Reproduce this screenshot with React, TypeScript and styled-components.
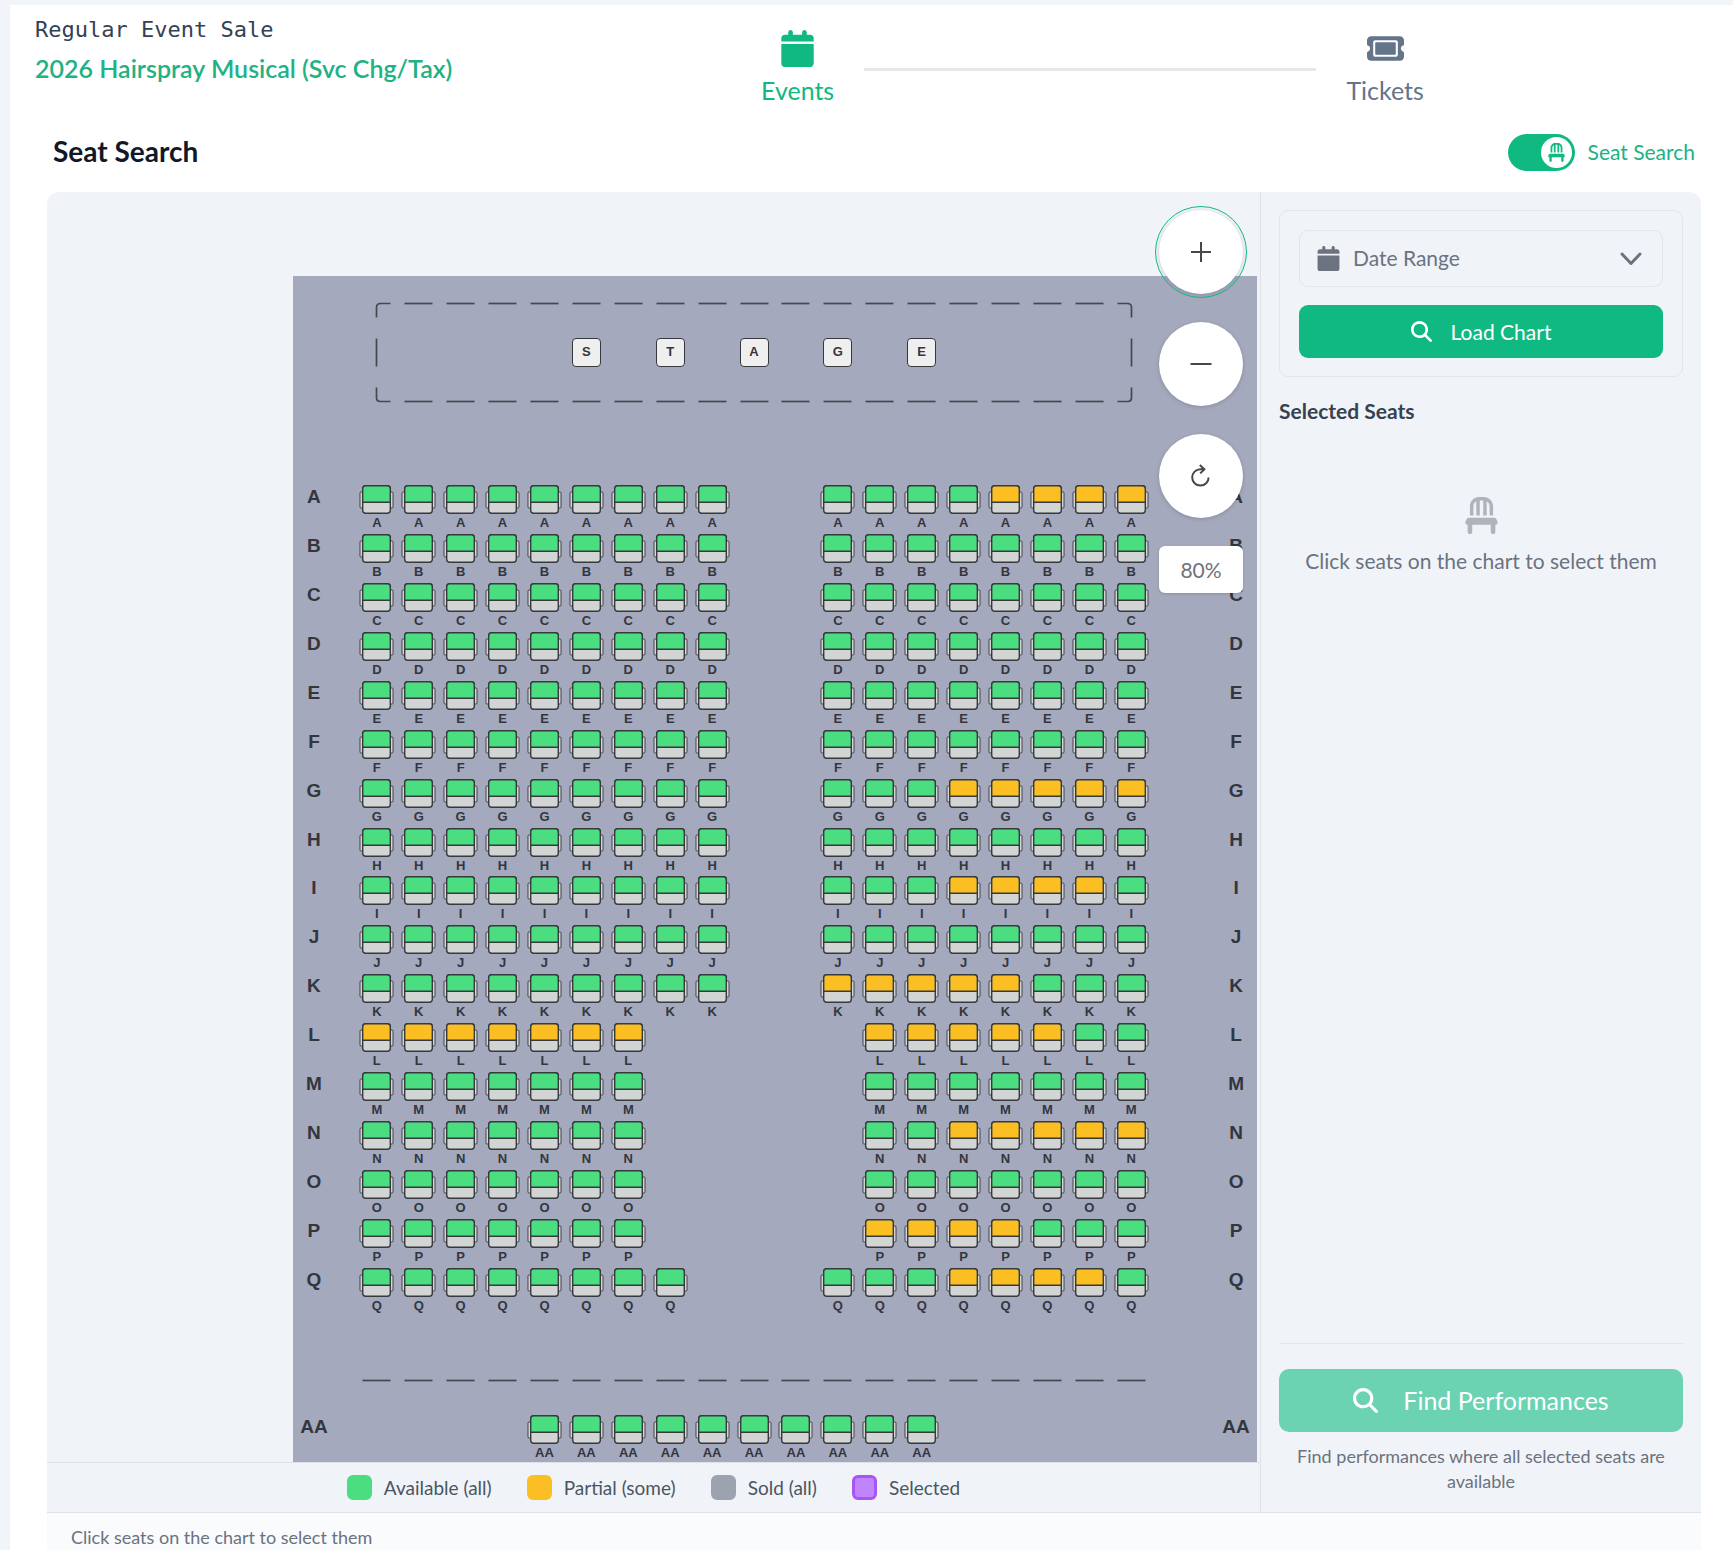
import React, { useState } from 'react';
import styled, { createGlobalStyle, css } from 'styled-components';
import { FaCalendar, FaTicket, FaChair, FaMagnifyingGlass } from 'react-icons/fa6';

const GlobalStyle = createGlobalStyle`
  *, *::before, *::after { box-sizing: border-box; }
  body {
    margin: 0;
    background: #f1f4f8;
    color: #374151;
    font-family: Lato, "Open Sans", sans-serif;
    font-size: 18px;
    line-height: 25px;
  }
  h1, h2, h3, p, ul { margin: 0; padding: 0; }
  ul { list-style: none; }
  button { font: inherit; border: 0; padding: 0; cursor: pointer; }
`;

const Page = styled.main`
  padding: 5px 0 0 10px;
`;

const Sheet = styled.div`
  background: #fff;
`;

const Header = styled.header`
  display: grid;
  grid-template-columns: minmax(0, 23fr) minmax(0, 21fr) minmax(0, 9fr);
  height: 117px;
  padding: 9px 25px 0;
`;

const SaleKind = styled.p`
  font-family: "DejaVu Sans Mono", monospace;
  font-size: 22px;
  line-height: 32px;
  color: #334155;
`;

const EventName = styled.h1`
  margin-top: 6px;
  font-size: 25px;
  line-height: 32px;
  font-weight: 600;
  color: #21b284;
`;

const Steps = styled.nav`
  display: flex;
  align-items: flex-start;
  gap: 30px;
`;

const Step = styled.a<{ $active?: boolean }>`
  display: flex;
  flex-direction: column;
  align-items: center;
  gap: 7px;
  padding-top: 16px;
  font-size: 25px;
  line-height: 32px;
  text-decoration: none;
  color: ${(p) => (p.$active ? '#10b981' : '#64748b')};
`;

const StepLine = styled.div`
  flex: 1;
  height: 3px;
  margin-top: 54px;
  background: #e5e7eb;
`;

const TitleBar = styled.div`
  display: flex;
  align-items: center;
  justify-content: space-between;
  height: 60px;
  padding: 0 38px 0 43px;
`;

const Title = styled.h2`
  padding-bottom: 2px;
  font-size: 28px;
  line-height: 36px;
  font-weight: 700;
  color: #111827;
`;

const Toggle = styled.label`
  display: flex;
  align-items: center;
  gap: 13px;
  font-size: 21px;
  color: #21b284;
  cursor: pointer;
`;

const ToggleText = styled.span`
  padding-bottom: 2px;
`;

const HiddenCheck = styled.input`
  position: absolute;
  width: 1px;
  height: 1px;
  margin: 0;
  opacity: 0;
`;

const Track = styled.span<{ $on: boolean }>`
  display: flex;
  justify-content: ${(p) => (p.$on ? 'flex-end' : 'flex-start')};
  width: 67px;
  height: 37px;
  padding: 3px;
  border-radius: 19px;
  background: ${(p) => (p.$on ? '#10b981' : '#cbd5e1')};
`;

const Knob = styled.span`
  display: grid;
  place-items: center;
  width: 31px;
  height: 31px;
  border-radius: 50%;
  background: #fff;
  color: #10b981;
`;

const Panel = styled.section`
  margin: 10px 32px 0 37px;
  border-radius: 12px 12px 0 0;
  background: #f0f4f8;
`;

const Columns = styled.div`
  display: grid;
  grid-template-columns: minmax(0, 1fr) 441px;
`;

const ChartColumn = styled.div`
  display: flex;
  flex-direction: column;
  min-width: 0;
`;

const Viewport = styled.div`
  position: relative;
  display: flex;
  justify-content: flex-end;
  padding: 84px 3px 0 0;
  overflow: hidden;
`;

const SeatMap = styled.div`
  width: 964px;
  height: 1186px;
  padding-top: 13px;
  overflow: hidden;
  background: #a4a9bd;
`;

const SeatGrid = styled.div`
  display: grid;
  grid-template-columns: repeat(46, minmax(0, 1fr));
  grid-template-rows: repeat(24, minmax(0, 1fr));
  height: 1175px;
  font-family: "Liberation Sans", Arial, sans-serif;
  font-weight: 700;
  color: #33363d;
`;

const cell = css<{ $row: number; $col: number }>`
  grid-row: ${(p) => p.$row};
  grid-column: ${(p) => p.$col} / span 2;
`;

const RowLabel = styled.span<{ $row: number; $col: number }>`
  ${cell}
  font-size: 19px;
  line-height: 24px;
  text-align: center;
`;

const SeatButton = styled.button<{ $row: number; $col: number }>`
  ${cell}
  display: flex;
  flex-direction: column;
  align-items: center;
  background: none;
  color: inherit;
  font-size: 13px;
  line-height: 18px;
`;

const StageTile = styled.span<{ $row: number; $col: number }>`
  ${cell}
  justify-self: center;
  display: grid;
  place-items: center;
  width: 29px;
  height: 29px;
  border: 1px solid #36393d;
  border-radius: 4px;
  background: #efefef;
  font-size: 13px;
  line-height: 18px;
`;

const WallCell = styled.span<{ $row: number; $col: number }>`
  ${cell}
  display: flex;
  justify-content: center;
  align-items: flex-start;
`;

const ZoomTools = styled.div`
  position: absolute;
  top: 18px;
  right: 17px;
  display: flex;
  flex-direction: column;
  gap: 28px;
  width: 84px;
`;

const RoundButton = styled.button<{ $focused?: boolean }>`
  display: grid;
  place-items: center;
  width: 84px;
  height: 84px;
  border-radius: 50%;
  background: #fff;
  color: #46484b;
  box-shadow: 0 1px 4px rgba(0, 0, 0, 0.18);
  ${(p) =>
    p.$focused &&
    css`
      outline: 1px solid #10b981;
      outline-offset: 3px;
    `}
`;

const ZoomLevel = styled.output`
  display: grid;
  place-items: center;
  height: 47px;
  border-radius: 6px;
  background: #fff;
  font-size: 21px;
  color: #6f7378;
  box-shadow: 0 1px 3px rgba(0, 0, 0, 0.15);
`;

const Legend = styled.ul`
  display: flex;
  justify-content: center;
  align-items: center;
  gap: 35px;
  height: 50px;
  border-top: 1px solid #dfe3e8;
  color: #4b5563;
  font-size: 19px;
`;

const LegendItem = styled.li`
  display: flex;
  align-items: center;
  gap: 12px;
`;

const Swatch = styled.span<{ $fill: string; $edge?: string }>`
  width: 25px;
  height: 25px;
  border: 3px solid ${(p) => p.$edge ?? p.$fill};
  border-radius: 6px;
  background: ${(p) => p.$fill};
`;

const Sidebar = styled.aside`
  display: flex;
  flex-direction: column;
  padding: 18px;
  border-left: 1px solid #dfe3e8;
`;

const FilterCard = styled.div`
  display: flex;
  flex-direction: column;
  gap: 18px;
  padding: 19px 19px 18px;
  border: 1px solid #e2e6ea;
  border-radius: 9px;
`;

const DateRange = styled.button`
  display: flex;
  align-items: center;
  gap: 12px;
  height: 57px;
  padding: 0 20px 0 16px;
  border: 1px solid #e2e6ea;
  border-radius: 9px;
  background: none;
  color: #6b7280;
  font-size: 21px;
  text-align: left;
`;

const Grow = styled.span`
  flex: 1;
  padding-bottom: 2px;
`;

const PrimaryButton = styled.button<{ $large?: boolean }>`
  display: flex;
  align-items: center;
  justify-content: center;
  width: 100%;
  color: #fff;
  ${(p) =>
    p.$large
      ? css`
          gap: 25px;
          height: 63px;
          border-radius: 10px;
          background: #6cd3b2;
          font-size: 25px;
        `
      : css`
          gap: 19px;
          height: 53px;
          border-radius: 9px;
          background: #10b981;
          font-size: 21px;
        `}
`;

const SideHeading = styled.h3`
  margin-top: 21px;
  font-size: 21px;
  line-height: 26px;
  font-weight: 700;
  color: #374151;
`;

const EmptyState = styled.div`
  display: flex;
  flex-direction: column;
  align-items: center;
  gap: 14px;
  flex: 1;
  padding-top: 73px;
  color: #6b7280;
  font-size: 21px;
  line-height: 26px;

  svg { color: #afb4bc; }
`;

const FindArea = styled.div`
  display: flex;
  flex-direction: column;
  gap: 12px;
  padding-top: 25px;
  border-top: 1px solid #e2e6ea;
  text-align: center;
  color: #6b7280;
`;

const Status = styled.footer`
  padding: 12px 24px;
  border-top: 1px solid #dfe3e8;
  background: #f9fbfd;
  color: #6b7280;
`;

type SeatState = 'g' | 'p';

const seatFill: Record<SeatState, string> = { g: '#4ade80', p: '#fbbf24' };

/* One character per column: g = available, p = partial, . = no seat. */
const seatRows: [string, number, string][] = [
  ['A', 5, 'ggggggggg..ggggpppp'],
  ['B', 6, 'ggggggggg..gggggggg'],
  ['C', 7, 'ggggggggg..gggggggg'],
  ['D', 8, 'ggggggggg..gggggggg'],
  ['E', 9, 'ggggggggg..gggggggg'],
  ['F', 10, 'ggggggggg..gggggggg'],
  ['G', 11, 'ggggggggg..gggppppp'],
  ['H', 12, 'ggggggggg..gggggggg'],
  ['I', 13, 'ggggggggg..gggppppg'],
  ['J', 14, 'ggggggggg..gggggggg'],
  ['K', 15, 'ggggggggg..pppppggg'],
  ['L', 16, 'ppppppp.....pppppgg'],
  ['M', 17, 'ggggggg.....ggggggg'],
  ['N', 18, 'ggggggg.....ggppppp'],
  ['O', 19, 'ggggggg.....ggggggg'],
  ['P', 20, 'ggggggg.....ppppggg'],
  ['Q', 21, 'gggggggg...gggppppg'],
  ['AA', 24, '....gggggggggg.....'],
];

const columnCount = 19;
const columnOf = (index: number) => 4 + index * 2;

type WallKind = 'across' | 'down' | 'topLeft' | 'topRight' | 'bottomLeft' | 'bottomRight';

const wallPaths: Record<WallKind, string> = {
  across: 'M0.5 14.5H28.5',
  down: 'M14.5 0.5V28.5',
  topLeft: 'M28.5 14.5H18.5Q14.5 14.5 14.5 18.5V28.5',
  topRight: 'M0.5 14.5H10.5Q14.5 14.5 14.5 18.5V28.5',
  bottomLeft: 'M14.5 0.5V10.5Q14.5 14.5 18.5 14.5H28.5',
  bottomRight: 'M14.5 0.5V10.5Q14.5 14.5 10.5 14.5H0.5',
};

function Wall({ row, index, kind }: { row: number; index: number; kind: WallKind }) {
  return (
    <WallCell $row={row} $col={columnOf(index)} aria-hidden="true">
      <svg width="29" height="29" viewBox="0 0 29 29" fill="none" stroke="#44484f" strokeWidth="1.7">
        <path d={wallPaths[kind]} />
      </svg>
    </WallCell>
  );
}

function SeatIcon({ fill }: { fill: string }) {
  return (
    <svg width="35" height="29" viewBox="0 0 35 29" stroke="#36393d">
      <rect x="1" y="7" width="4" height="16" rx="1" fill="#d3d4d4" strokeWidth="0.9" />
      <rect x="30" y="7" width="4" height="16" rx="1" fill="#d3d4d4" strokeWidth="0.9" />
      <rect x="3.7" y="0.7" width="27.6" height="27.6" rx="3" fill="#d3d4d4" strokeWidth="1.4" />
      <path d="M3.7 17.3V3.7Q3.7 0.7 6.7 0.7H28.3Q31.3 0.7 31.3 3.7V17.3Z" fill={fill} strokeWidth="1.4" />
    </svg>
  );
}

function VenueMap() {
  const inner = Array.from({ length: columnCount - 2 }, (_, i) => i + 1);
  const all = Array.from({ length: columnCount }, (_, i) => i);
  return (
    <SeatMap>
      <SeatGrid>
        <Wall row={1} index={0} kind="topLeft" />
        {inner.map((i) => <Wall key={'t' + i} row={1} index={i} kind="across" />)}
        <Wall row={1} index={18} kind="topRight" />
        <Wall row={2} index={0} kind="down" />
        {['S', 'T', 'A', 'G', 'E'].map((letter, i) => (
          <StageTile key={letter} $row={2} $col={columnOf(5 + i * 2)}>{letter}</StageTile>
        ))}
        <Wall row={2} index={18} kind="down" />
        <Wall row={3} index={0} kind="bottomLeft" />
        {inner.map((i) => <Wall key={'b' + i} row={3} index={i} kind="across" />)}
        <Wall row={3} index={18} kind="bottomRight" />
        {seatRows.map(([name, row, seats]) => (
          <React.Fragment key={name}>
            <RowLabel $row={row} $col={1}>{name}</RowLabel>
            {seats.split('').map((state, i) =>
              state === '.' ? null : (
                <SeatButton key={i} type="button" $row={row} $col={columnOf(i)}>
                  <SeatIcon fill={seatFill[state as SeatState]} />
                  {name}
                </SeatButton>
              ),
            )}
            <RowLabel $row={row} $col={45}>{name}</RowLabel>
          </React.Fragment>
        ))}
        {all.map((i) => <Wall key={'r' + i} row={23} index={i} kind="across" />)}
      </SeatGrid>
    </SeatMap>
  );
}

export default function App() {
  const [searching, setSearching] = useState(true);
  return (
    <Page>
      <GlobalStyle />
      <Sheet>
        <Header>
          <div>
            <SaleKind>Regular Event Sale</SaleKind>
            <EventName>2026 Hairspray Musical (Svc Chg/Tax)</EventName>
          </div>
          <Steps>
            <Step href="#events" $active><FaCalendar size={37} />Events</Step>
            <StepLine />
            <Step href="#tickets"><FaTicket size={37} />Tickets</Step>
          </Steps>
        </Header>
        <TitleBar>
          <Title>Seat Search</Title>
          <Toggle>
            <HiddenCheck type="checkbox" checked={searching} onChange={() => setSearching(!searching)} />
            <Track $on={searching}><Knob><FaChair size={19} /></Knob></Track>
            <ToggleText>Seat Search</ToggleText>
          </Toggle>
        </TitleBar>
        <Panel>
          <Columns>
            <ChartColumn>
              <Viewport>
                <VenueMap />
                <ZoomTools>
                  <RoundButton type="button" aria-label="Zoom in" $focused>
                    <svg width="24" height="24" viewBox="0 0 24 24" stroke="currentColor" strokeWidth="2">
                      <path d="M2 12H22M12 2V22" />
                    </svg>
                  </RoundButton>
                  <RoundButton type="button" aria-label="Zoom out">
                    <svg width="24" height="24" viewBox="0 0 24 24" stroke="currentColor" strokeWidth="2">
                      <path d="M1.5 12H22.5" />
                    </svg>
                  </RoundButton>
                  <RoundButton type="button" aria-label="Reset view">
                    <svg width="24" height="24" viewBox="0 0 24 24" fill="none" stroke="currentColor" strokeWidth="2">
                      <path d="M15.4 5.2H11.4A8.2 8.2 0 1 0 19.6 13.4M10.8 1L15.4 5.2L11.2 9.4" />
                    </svg>
                  </RoundButton>
                  <ZoomLevel>80%</ZoomLevel>
                </ZoomTools>
              </Viewport>
              <Legend>
                <LegendItem><Swatch $fill="#4ade80" />Available (all)</LegendItem>
                <LegendItem><Swatch $fill="#fbbf24" />Partial (some)</LegendItem>
                <LegendItem><Swatch $fill="#9ca3af" />Sold (all)</LegendItem>
                <LegendItem><Swatch $fill="#c084fc" $edge="#a855f7" />Selected</LegendItem>
              </Legend>
            </ChartColumn>
            <Sidebar>
              <FilterCard>
                <DateRange type="button">
                  <FaCalendar size={25} />
                  <Grow>Date Range</Grow>
                  <svg width="22" height="14" viewBox="0 0 22 14" fill="none" stroke="currentColor" strokeWidth="3" strokeLinecap="round" strokeLinejoin="round">
                    <path d="M2 2L11 11.5L20 2" />
                  </svg>
                </DateRange>
                <PrimaryButton type="button"><FaMagnifyingGlass size={21} />Load Chart</PrimaryButton>
              </FilterCard>
              <SideHeading>Selected Seats</SideHeading>
              <EmptyState>
                <FaChair size={37} />
                <p>Click seats on the chart to select them</p>
              </EmptyState>
              <FindArea>
                <PrimaryButton type="button" $large><FaMagnifyingGlass size={25} />Find Performances</PrimaryButton>
                <p>Find performances where all selected seats are available</p>
              </FindArea>
            </Sidebar>
          </Columns>
          <Status>Click seats on the chart to select them</Status>
        </Panel>
      </Sheet>
    </Page>
  );
}
